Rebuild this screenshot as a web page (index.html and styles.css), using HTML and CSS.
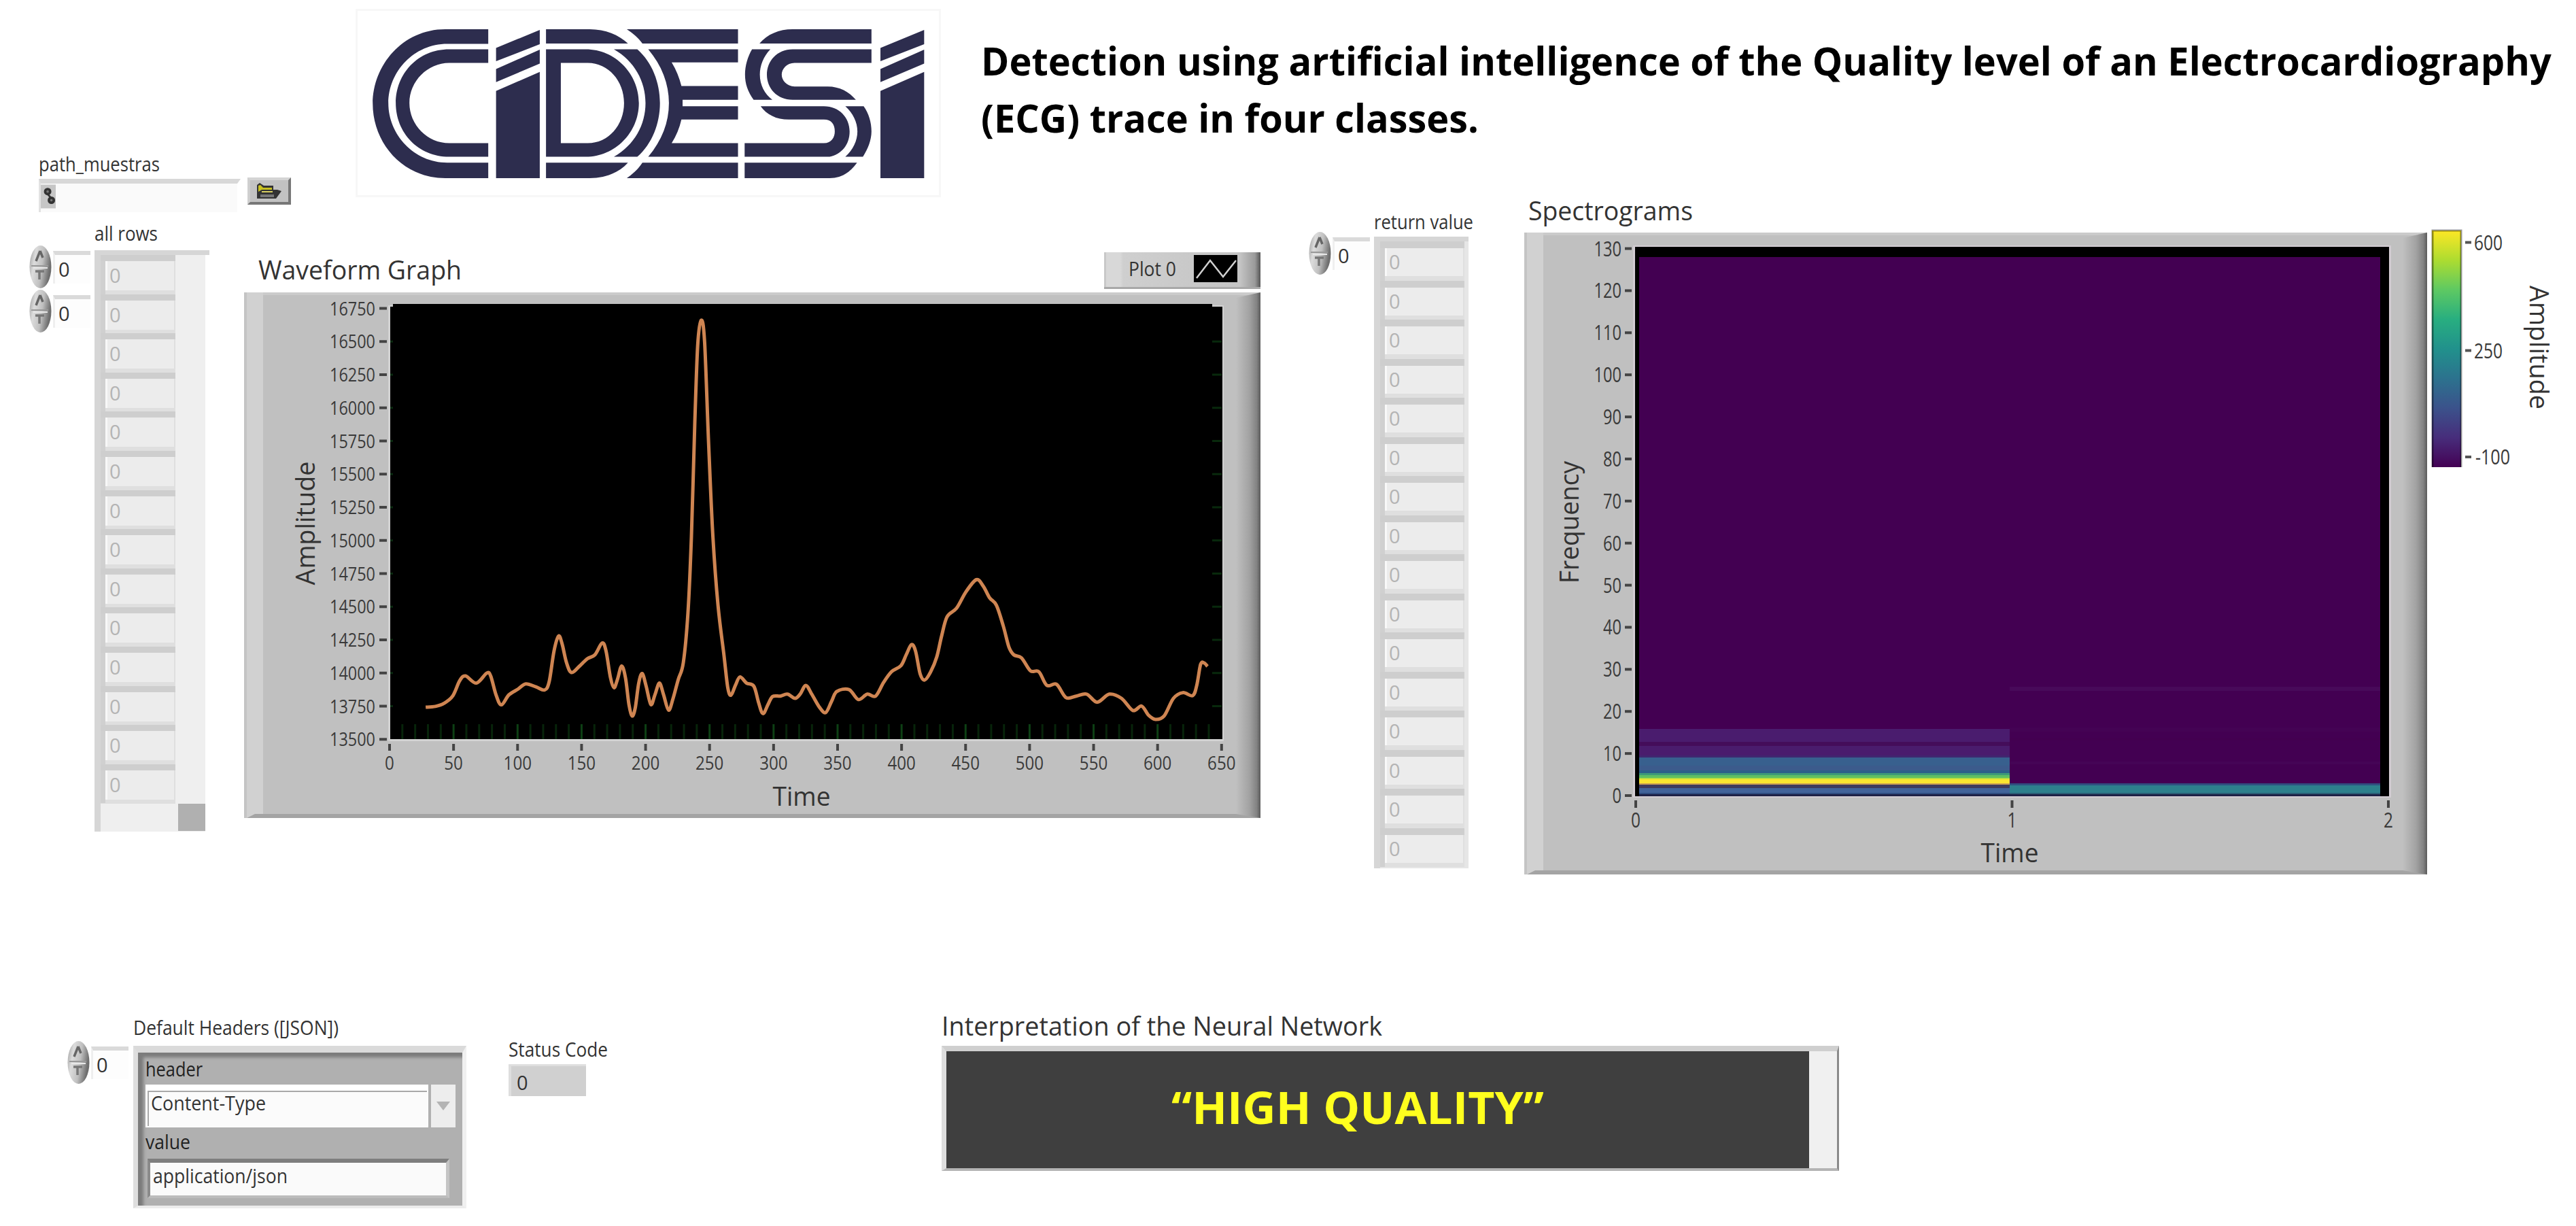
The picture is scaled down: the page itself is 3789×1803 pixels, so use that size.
FILE: index.html
```html
<!DOCTYPE html>
<html lang="en">
<head>
    <meta charset="UTF-8">
    <meta name="viewport" content="width=device-width, initial-scale=1.0">
    <title>ECG Quality Level</title>
    <link rel="stylesheet" href="styles.css">
</head>
<body>
    <svg width="0" height="0" class="defs">
        <defs>
            <linearGradient id="knobFill" x1="0" x2="1" y1="0" y2="0.3">
                <stop offset="0" stop-color="#9a9a9a"/>
                <stop offset="0.3" stop-color="#dcdcdc"/>
                <stop offset="0.65" stop-color="#c0c0c0"/>
                <stop offset="1" stop-color="#6e6e6e"/>
            </linearGradient>
            <symbol id="knob" viewBox="0 0 33 65" preserveAspectRatio="none">
                <ellipse cx="16.5" cy="32.5" rx="16" ry="31.5" fill="url(#knobFill)"/>
                <path d="M16 9 L10 24 M16 9 L20 19" stroke="#666" stroke-width="3.5" fill="none"/>
                <path d="M3 31 H28" stroke="#999" stroke-width="2"/>
                <path d="M6 34 H27" stroke="#e8e8e8" stroke-width="2"/>
                <path d="M9 39 H22 M15 39 V51" stroke="#777" stroke-width="3.5" fill="none"/>
            </symbol>
        </defs>
    </svg>

    <header class="header">
        <div class="path-control">
            <span class="label" data-width="178">path_muestras</span>
            <div class="path-row">
                <div class="path-field">
                    <svg class="path-icon" viewBox="0 0 24 38">
                        <rect width="24" height="38" fill="#c6c6c6"/>
                        <circle cx="11" cy="11" r="4" fill="#777" stroke="#333" stroke-width="4"/>
                        <circle cx="17" cy="25" r="4" fill="#777" stroke="#333" stroke-width="4"/>
                        <path d="M11 15 L17 22" stroke="#333" stroke-width="3"/>
                    </svg>
                </div>
                <div class="browse">
                    <svg width="38" height="26" viewBox="0 0 38 26">
                        <path d="M1 24 V4 L5 1 L11 5 H25 V11 H31 L37 13 L29 24 Z" fill="#333"/>
                        <path d="M3 14 V5 L6 4 L10 8 H23 V11 H8 Z" fill="#c8c020"/>
                        <path d="M8 14 H24" stroke="#d8cf60" stroke-width="2"/>
                        <path d="M6 20 H26" stroke="#777" stroke-width="4"/>
                    </svg>
                </div>
            </div>
        </div>
        <svg class="logo" viewBox="40 40 1500 830" preserveAspectRatio="none">
            <g fill="#2d2d4e">
                <path d="M380 130 H270 C160 130 84 290 84 458 C84 630 160 786 270 786 H380 V718 H275 C190 718 124 595 124 456 C124 316 190 194 275 194 H380 Z"/>
                <path d="M380 218 H280 C200 218 143 325 143 455 C143 585 200 692 280 692 H380 V632 H280 C225 632 178 552 178 455 C178 358 225 278 280 278 H380 Z"/>
                <path d="M400 212 L512 133 V196 L400 271 Z M400 305 L512 220 V281 L400 363 Z M400 402 L512 318 V786 H400 Z"/>
                <path d="M528 130 H640 C680 130 715 155 738 193 H528 Z M528 718 H738 C715 762 680 786 640 786 H528 Z"/>
                <path fill-rule="evenodd" d="M528 218 H630 C705 218 766 325 766 455 C766 585 705 692 630 692 H528 Z M566 278 V632 H635 C688 632 728 552 728 455 C728 358 688 278 635 278 Z"/>
                <path d="M702 218 H762 C800 275 820 365 820 455 C820 545 800 635 762 692 H702 C755 640 783 550 783 455 C783 360 755 270 702 218 Z"/>
                <path d="M735 130 H1020 V193 H775 C765 168 750 147 735 130 Z M735 786 H1020 V718 H775 C765 745 750 768 735 786 Z"/>
                <path d="M790 218 H1020 V276 H850 C862 310 870 345 875 380 H1020 V441 H878 V469 H1020 V528 H875 C870 565 862 600 850 632 H1020 V692 H790 C825 620 843 540 843 455 C843 370 825 290 790 218 Z"/>
                <path d="M1075 193 C1095 152 1125 130 1160 130 H1362 V193 Z M1056 218 H1103 C1085 250 1076 290 1076 330 C1076 375 1088 415 1108 441 H1060 C1045 405 1038 370 1038 330 C1038 290 1045 250 1056 218 Z"/>
                <path d="M1362 218 H1160 C1120 218 1094 270 1094 330 C1094 390 1120 441 1160 441 H1322 C1305 405 1280 382 1250 382 H1165 C1145 382 1132 355 1132 330 C1132 305 1145 278 1165 278 H1362 Z"/>
                <path d="M1078 469 H1240 C1280 469 1306 520 1306 580 C1306 640 1285 680 1255 692 H1037 V632 H1240 C1260 632 1268 605 1268 580 C1268 550 1260 528 1240 528 H1150 C1118 528 1093 505 1078 469 Z"/>
                <path d="M1295 469 H1342 C1355 500 1362 540 1362 580 C1362 620 1352 660 1340 692 H1295 C1315 660 1326 620 1326 580 C1326 540 1315 500 1295 469 Z M1037 718 H1325 C1308 760 1285 786 1255 786 H1037 Z"/>
                <path d="M1385 212 L1497 133 V196 L1385 271 Z M1385 305 L1497 220 V281 L1385 363 Z M1385 402 L1497 318 V786 H1385 Z"/>
            </g>
        </svg>
        <h1 class="title">
            <span class="fit" data-width="2310">Detection using artificial intelligence of the Quality level of an Electrocardiography</span><br>
            <span class="fit" data-width="732">(ECG) trace in four classes.</span>
        </h1>
    </header>

    <main class="main">
        <div class="index-col">
            <div class="index"><svg class="knob"><use href="#knob"/></svg><div class="index-value">0</div></div>
            <div class="index"><svg class="knob"><use href="#knob"/></svg><div class="index-value">0</div></div>
        </div>
        <div class="array rows-array">
            <span class="label" data-width="93">all rows</span>
            <div class="array-frame">
                <div class="cells" data-count="14"></div>
                <div class="scroll"></div>
                <div class="scroll-corner"></div>
            </div>
        </div>

        <section class="waveform">
            <div class="graph-head">
                <span class="label large" data-width="299">Waveform Graph</span>
                <div class="legend">
                    <span class="label" data-width="70">Plot 0</span>
                    <svg class="legend-line" viewBox="0 0 64 40">
                        <path d="M4 34 L24 8 L43 32 L62 8" fill="none" stroke="#d0d0d0" stroke-width="2.5"/>
                    </svg>
                </div>
            </div>
            <svg id="waveform" class="graph-panel" width="1495" height="773" viewBox="359 430 1495 773"></svg>
        </section>

        <div class="index-col return-index">
            <div class="index"><svg class="knob"><use href="#knob"/></svg><div class="index-value">0</div></div>
        </div>
        <div class="array return-array">
            <span class="label" data-width="146">return value</span>
            <div class="array-frame">
                <div class="cells" data-count="16"></div>
            </div>
        </div>

        <section class="spectrogram">
            <span class="label large" data-width="242">Spectrograms</span>
            <svg id="spectrogram" class="graph-panel" width="1328" height="944" viewBox="2242 342 1328 944"></svg>
        </section>
        <svg id="ramp" class="ramp" width="213" height="380" viewBox="3576 337 213 380"></svg>
    </main>

    <footer class="footer">
        <div class="index-col headers-index">
            <div class="index"><svg class="knob"><use href="#knob"/></svg><div class="index-value">0</div></div>
        </div>
        <div class="headers">
            <span class="label" data-width="302">Default Headers ([JSON])</span>
            <div class="cluster">
                <span class="label" data-width="84">header</span>
                <div class="combo">
                    <div class="combo-text"><span class="label" data-width="169">Content-Type</span></div>
                    <div class="combo-arrow"></div>
                </div>
                <span class="label" data-width="66">value</span>
                <div class="text-field"><span class="label" data-width="198">application/json</span></div>
            </div>
        </div>
        <div class="status">
            <span class="label" data-width="146">Status Code</span>
            <div class="status-value">0</div>
        </div>
        <div class="result">
            <span class="label large" data-width="648">Interpretation of the Neural Network</span>
            <div class="result-box">
                <div class="result-text"><span class="fit" data-width="548">“HIGH QUALITY”</span></div>
                <div class="result-scroll"></div>
            </div>
        </div>
    </footer>

    <script>
        // array cells
        document.querySelectorAll('.cells').forEach(function(el) {
            for (var i = 0; i < Number(el.dataset.count); i++) {
                var cell = document.createElement('div');
                cell.className = 'cell';
                cell.innerHTML = '<div class="cell-value">0</div>';
                el.appendChild(cell);
            }
        });

        // squeeze captions to their width
        document.querySelectorAll('[data-width]').forEach(function(el) {
            var natural = el.getBoundingClientRect().width;
            el.style.transform = 'scaleX(' + (el.dataset.width / natural).toFixed(4) + ')';
        });

        function rect(x, y, w, h, fill) {
            return '<rect x="' + x + '" y="' + y + '" width="' + w + '" height="' + h + '" fill="' + fill + '"/>';
        }

        function text(str, x, y, len, anchor, cls) {
            return '<text class="' + (cls || 'tick') + '" x="' + x + '" y="' + y + '" text-anchor="' + anchor +
                '" textLength="' + len + '" lengthAdjust="spacingAndGlyphs">' + str + '</text>';
        }

        // raised grey plate behind a graph
        function plate(id, x, y, w, h) {
            return '<defs><linearGradient id="' + id + '"><stop offset="0" stop-color="#c0c0c0"/>' +
                '<stop offset="0.55" stop-color="#a2a2a2"/><stop offset="0.85" stop-color="#828282"/><stop offset="1" stop-color="#5a5a5a"/></linearGradient></defs>' +
                rect(x, y, w, h, '#c0c0c0') +
                rect(x, y, w, 4, '#cbcbcb') +
                rect(x, y, 28, h, '#d1d1d1') +
                rect(x, y, 4, h, '#c4c4c4') +
                '<path fill="#a4a4a4" d="M' + (x + 4) + ' ' + (y + h) + ' l12 -6 H' + (x + w) + ' v6 Z"/>' +
                '<path fill="url(#' + id + ')" d="M' + (x + w - 36) + ' ' + (y + 8) + ' L' + (x + w) + ' ' + y + ' V' + (y + h) + ' L' + (x + w - 36) + ' ' + (y + h - 6) + ' Z"/>';
        }

        var samples = [
            [28.2,13742],[35.8,13748],[42.5,13771],[49.3,13826],[54.7,13941],[59.3,13978],[67.8,13924],[75.9,13999],[79,13978],
            [83.2,13835],[87.3,13760],[93.2,13835],[100.3,13878],[106.5,13918],[114.4,13895],[121.1,13872],[124.7,13935],
            [128.5,14166],[132,14278],[134.7,14223],[138.2,14079],[142,14004],[148.2,14050],[154.5,14108],[160.4,14137],
            [166.1,14226],[169.1,14166],[172.6,13964],[175.3,13889],[178,13950],[181.3,14053],[184.3,13964],[187,13763],
            [189.4,13676],[191.9,13734],[194.6,13921],[197.3,13996],[200.3,13907],[204.1,13763],[207.3,13835],[210.8,13924],
            [214.1,13835],[217.9,13720],[221.4,13806],[225.5,13950],[229.5,14079],[233.1,14453],[235.8,15029],[238.5,15892],
            [240.7,16468],[243.4,16661],[246.1,16497],[249.3,15720],[252.6,15029],[256.6,14511],[261.2,14137],[264.2,13892],
            [266.7,13832],[270.2,13907],[273.7,13970],[278.9,13924],[284.6,13901],[288.3,13777],[291.7,13694],[295.7,13763],
            [299.2,13823],[305.4,13826],[310.8,13841],[316.8,13809],[320.9,13843],[325.2,13907],[329.8,13841],[335.8,13743],
            [340.7,13702],[345.3,13786],[349.4,13861],[358.9,13875],[366.2,13800],[373.2,13841],[379.7,13826],[386,13930],
            [392.2,14010],[399.5,14056],[403.6,14137],[407.7,14214],[410.9,14166],[414.5,13993],[418,13947],[422.6,14007],
            [427.5,14122],[431.3,14281],[435.6,14425],[442.9,14488],[450.3,14612],[458.4,14704],[463.8,14655],[468.7,14568],
            [474.1,14511],[479.5,14353],[483.9,14194],[487.7,14137],[493.7,14114],[500.7,14016],[507.2,14010],[513.5,13907],
            [521.1,13915],[528.4,13815],[536.5,13826],[544.6,13841],[552.8,13780],[562.3,13841],[571.8,13809],[580.7,13717],
            [587.5,13751],[592.9,13682],[598.3,13650],[605.1,13676],[612.4,13809],[619.8,13852],[627.4,13829],[630.6,13907],
            [633.6,14065],[636.3,14076],[639,14050]
        ];

        function curve(pts) {
            var d = 'M' + pts[0];
            for (var i = 0; i < pts.length - 1; i++) {
                var a = pts[i - 1] || pts[i], b = pts[i], c = pts[i + 1], e = pts[i + 2] || c;
                d += 'C' + [b[0] + (c[0] - a[0]) / 6, b[1] + (c[1] - a[1]) / 6, c[0] - (e[0] - b[0]) / 6,
                    c[1] - (e[1] - b[1]) / 6, c[0], c[1]].map(function(n) { return n.toFixed(1); }).join(' ');
            }
            return d;
        }

        function drawWaveform() {
            var x0 = 573, xs = 1.8828, yTop = 453.5, ys = 0.195;
            var s = plate('edgeA', 359, 430, 1495, 773);
            s += rect(571, 449, 1229, 641, '#d2d2d2') + rect(574, 451, 1224, 636, '#000') + rect(578, 447, 1205, 8, '#000');
            for (var t = 10; t < 650; t += 10) {
                s += rect(x0 + t * xs - 1.5, 1065, 3, 22, t % 50 ? '#07240a' : '#0d4014');
            }
            for (var a = 16750; a >= 13500; a -= 250) {
                var y = yTop + (16750 - a) * ys;
                if (a < 16750 && a > 13500) s += rect(1783, y - 1.5, 14, 3, '#08290c') + rect(574, y - 1.5, 4, 3, '#0a2a10');
                s += rect(558, y - 2, 11, 4, '#444') + text(a, 552, y + 10, 67, 'end');
            }
            for (t = 0; t <= 650; t += 50) {
                var x = x0 + t * xs;
                s += rect(x - 2, 1094, 4, 10, '#444') + text(t, x, 1132, 13.8 * String(t).length, 'middle');
            }
            s += text('Time', 1179, 1185, 85, 'middle', 'axis-title');
            s += '<g transform="translate(463 769.5) rotate(-90)">' + text('Amplitude', 0, 0, 182, 'middle', 'axis-title') + '</g>';
            var pts = samples.map(function(p) { return [x0 + p[0] * xs, yTop + (16750 - p[1]) * ys]; });
            s += '<path d="' + curve(pts) + '" fill="none" stroke="#cf8552" stroke-width="5" stroke-linejoin="round"/>';
            document.getElementById('waveform').innerHTML = s;
        }

        function drawSpectrogram() {
            var s = plate('edgeB', 2242, 342, 1328, 944);
            s += rect(2402, 361, 1115, 812, '#d2ccd2') + rect(2405, 363, 1109, 808, '#000') + rect(2411, 378, 1090, 792, '#430052');
            // power bands of each second: [top, height, colour]
            [[1072, 19, '#4a1c6e'], [1091, 6, '#440d5a'], [1097, 14, '#4a1c6d'], [1111, 3, '#40266f'], [1114, 12, '#38608e'],
             [1126, 7, '#3c5b8c'], [1133, 4, '#2b5f89'], [1137, 3, '#3c9a78'], [1140, 4, '#5fbf62'], [1144, 2, '#b8dc40'],
             [1146, 6, '#fbe530'], [1152, 2, '#c89a55'], [1154, 5, '#3e3a5e'], [1159, 7, '#42639a'], [1166, 2, '#2f4c80'],
             [1168, 3, '#1e2145']].forEach(function(b) {
                s += rect(2411, b[0], 545, b[1], b[2]);
            });
            [[1010, 6, '#480a5a'], [1070, 6, '#440354'], [1085, 4, '#430050'], [1120, 4, '#450556'], [1152, 3, '#305080'], [1155, 11, '#2d808c'], [1166, 2, '#2b5d75'],
             [1168, 3, '#1e2145']].forEach(function(b) {
                s += rect(2956, b[0], 545, b[1], b[2]);
            });
            for (var f = 0; f <= 130; f += 10) {
                var y = 1170 - f * 6.188;
                s += rect(2390, y - 2, 10, 4, '#444') + text(f, 2385, y + 11, 13.5 * String(f).length, 'end', 'tick tall');
            }
            [0, 1, 2].forEach(function(t) {
                var x = 2406 + t * 553.5;
                s += rect(x - 2, 1177, 4, 11, '#444') + text(t, x, 1217, 14, 'middle', 'tick tall');
            });
            s += text('Time', 2956, 1268, 85, 'middle', 'axis-title');
            s += '<g transform="translate(2322 768) rotate(-90)">' + text('Frequency', 0, 0, 180, 'middle', 'axis-title') + '</g>';
            document.getElementById('spectrogram').innerHTML = s;
        }

        function drawRamp() {
            var stops = ['#fde725', '#addc30', '#5ec962', '#28ae80', '#21918c', '#2c728e', '#3b528b', '#472d7b', '#440154'];
            var s = '<defs><linearGradient id="viridis" x2="0" y2="1">';
            stops.forEach(function(c, i) {
                s += '<stop offset="' + i / 8 + '" stop-color="' + c + '"/>';
            });
            s += '</linearGradient></defs>' + rect(3577, 339, 43, 348, 'url(#viridis)') +
                '<path d="M3578 687 V339 H3620 V687" fill="none" stroke="#000" stroke-opacity="0.4" stroke-width="3"/>';
            [[600, 356.5, 42], [250, 515.5, 42], [-100, 672, 51]].forEach(function(r) {
                s += rect(3626, r[1] - 2, 9, 4, '#555') + text(r[0], r[0] < 0 ? 3641 : 3639, r[1] + 11, r[2], 'start', 'tick tall');
            });
            s += '<g transform="translate(3721 511) rotate(90)">' + text('Amplitude', 0, 0, 182, 'middle', 'axis-title') + '</g>';
            document.getElementById('ramp').innerHTML = s;
        }

        drawWaveform();
        drawSpectrogram();
        drawRamp();
    </script>
</body>
</html>
```
FILE: styles.css
```css
* {
    box-sizing: border-box;
}
body {
    margin: 0;
    width: 3789px;
    height: 1803px;
    background-color: #fff;
    font-family: "Open Sans", "Noto Sans", sans-serif;
    font-weight: 500;
    color: #333;
    overflow: hidden;
}
.defs {
    position: absolute;
}
.label, .fit {
    display: inline-block;
    white-space: nowrap;
    transform-origin: left center;
}
.label {
    font-size: 28.5px;
    line-height: 36px;
    height: 36px;
    vertical-align: top;
}
.label.large {
    font-size: 38px;
    font-weight: 400;
    line-height: 50px;
    height: 48px;
}
.header {
    display: flex;
    align-items: flex-start;
    height: 310px;
    padding-left: 57px;
}
.path-control {
    flex: none;
    width: 371px;
    margin-top: 223px;
}
.path-row {
    display: flex;
    justify-content: space-between;
    align-items: flex-start;
    margin-top: 2px;
}
.path-field {
    width: 297px;
    height: 49px;
    margin-top: 2px;
    border-top: 7px solid #d8d8d8;
    border-left: 3px solid #e2e2e2;
    border-right: 5px solid #fff;
    background-color: #fafafa;
}
.path-icon {
    display: block;
    width: 22px;
    height: 38px;
}
.browse {
    display: flex;
    align-items: center;
    justify-content: center;
    width: 64px;
    height: 40px;
    background-color: #c2c2c2;
    border: 4px solid;
    border-color: #d4d4d4 #777 #777 #cfcfcf;
}
.logo {
    flex: none;
    width: 861px;
    height: 277px;
    margin: 13px 0 0 95px;
    outline: 3px solid #f7f7f7;
    outline-offset: -3px;
}
.title {
    margin: 47px 0 0 59px;
    font-size: 57px;
    line-height: 84px;
    font-weight: 700;
    color: #000;
    white-space: nowrap;
}
.main {
    display: flex;
    align-items: flex-start;
    height: 1183px;
    padding-left: 43px;
}
.main > *, .footer > * {
    flex: none;
}
.index-col {
    margin-top: 50px;
}
.index {
    display: flex;
    width: 90px;
    height: 65px;
}
.knob {
    width: 33px;
    height: 65px;
}
.index-value {
    width: 55px;
    height: 48px;
    margin: 9px 0 0 2px;
    padding-left: 5px;
    border-top: 6px solid #dadada;
    border-left: 3px solid #efefef;
    background-color: #fdfdfd;
    font-size: 29px;
    line-height: 42px;
}
.array .label {
    display: block;
    width: max-content;
}
.rows-array {
    width: 169px;
    margin: 15px 0 0 6px;
}
.array-frame {
    display: grid;
    grid-template-columns: 114px 40px;
    width: 169px;
    height: 855px;
    margin-top: 7px;
    padding-right: 6px;
    border-top: 7px solid #d6d6d6;
    border-left: 9px solid #d6d6d6;
    background: linear-gradient(#efefef, #efefef) content-box;
}
.cells {
    width: 110px;
    background-color: #dfdfdf;
}
.cell {
    height: 57.6px;
    padding-left: 7px;
    border-top: 9px solid #cecece;
    background: linear-gradient(90deg, #d0d0d0 7px, #dfdfdf 7px);
}
.cell-value {
    width: 101px;
    height: 43px;
    padding-left: 3px;
    background-color: #ececec;
    border-left: 3px solid #f8f8f8;
    color: #b4b4b4;
    font-size: 29px;
    line-height: 41px;
}
.scroll-corner {
    grid-column: 2;
    height: 40px;
    background-color: #b0b0b0;
}
.waveform {
    width: 1495px;
    margin: 61px 0 0 51px;
}
.graph-head {
    display: flex;
    justify-content: space-between;
    align-items: flex-start;
    height: 59px;
    padding-left: 21px;
}
.legend {
    display: flex;
    align-items: center;
    justify-content: space-between;
    width: 230px;
    height: 54px;
    padding: 0 34px 3px 36px;
    background: linear-gradient(90deg, #c8c8c8 3px, #d8d8d8 3px, #d8d8d8 24px, #cfcfcf 28px, #c4c4c4 200px, #9a9a9a 222px, #555 230px);
    border-bottom: 3px solid #a8a8a8;
}
.legend .label {
    width: max-content;
}
.legend-line {
    width: 64px;
    height: 40px;
    background-color: #000;
}
.graph-panel {
    display: block;
}
.tick {
    font-size: 28px;
    fill: #3a3a3a;
}
.tick.tall {
    font-size: 31px;
}
.axis-title {
    font-size: 38px;
    fill: #333;
}
.return-index {
    margin: 30px 0 0 71px;
}
.return-array {
    width: 141px;
    margin: -2px 0 0 6px;
}
.return-array .array-frame {
    display: block;
    width: 139px;
    height: 929px;
    margin-top: 4px;
    padding-right: 0;
    background: #e6e6e6;
}
.return-array .cells {
    width: 124px;
}
.return-array .cell {
    height: 57.5px;
    border-top-width: 10px;
}
.return-array .cell-value {
    width: 115px;
    height: 41px;
    line-height: 39px;
}
.spectrogram {
    width: 1328px;
    margin: -26px 0 0 80px;
}
.spectrogram .label {
    margin: 0 0 10px 6px;
}
.ramp {
    margin: 27px 0 0 6px;
}
.footer {
    display: flex;
    align-items: flex-start;
    height: 310px;
    padding-left: 99px;
}
.headers-index {
    margin-top: 37px;
}
.headers {
    width: 494px;
    margin-left: 7px;
}
.cluster {
    width: 490px;
    height: 239px;
    margin-top: 9px;
    padding: 6px 10px 0 11px;
    border: solid;
    border-width: 10px 6px 4px 7px;
    border-color: #dadada #f0f0f0 #ececec #dedede;
    background-color: #b0b0b0;
    box-shadow: inset 8px 7px 4px #7c7c7c;
}
.cluster > .label {
    display: block;
    width: max-content;
    color: #222;
}
.combo {
    display: flex;
    gap: 4px;
    height: 63px;
    margin-top: 5px;
}
.combo-text {
    width: 420px;
    padding: 7px 0 0 6px;
    background-color: #fbfbfb;
    border: 2px solid #fff;
    box-shadow: inset 2px 8px 0 -1px #fff, inset 4px 10px 0 -1px #a8a8a8;
}
.combo-arrow {
    display: flex;
    align-items: center;
    justify-content: center;
    width: 36px;
    background-color: #ededed;
}
.combo-arrow::before {
    content: "";
    border: solid transparent;
    border-width: 13px 10px 0;
    border-top-color: #b4b4b4;
}
.cluster .combo + .label {
    margin-top: 3px;
}
.text-field {
    width: 444px;
    height: 58px;
    margin: 7px 0 0 3px;
    padding: 1px 0 0 4px;
    border: solid;
    border-width: 6px 5px 4px 4px;
    border-color: #7e7e7e #c4c4c4 #bcbcbc #8a8a8a;
    background-color: #fafafa;
}
.status {
    width: 146px;
    margin: 32px 0 0 58px;
}
.status-value {
    width: 114px;
    height: 47px;
    margin-top: 4px;
    padding-left: 8px;
    border-top: 3px solid #dedede;
    border-left: 4px solid #dedede;
    background-color: #d0d0d0;
    font-size: 29px;
    line-height: 48px;
}
.result {
    width: 1322px;
    margin: -10px 0 0 491px;
}
.result-box {
    display: flex;
    width: 1320px;
    height: 184px;
    margin-top: 7px;
    border: solid;
    border-width: 8px 3px 4px 7px;
    border-color: #cfcfcf #8a8a8a #b4b4b4 #dedede;
    background-color: #3f3f3f;
}
.result-text {
    flex: 1;
    padding-left: 331px;
    color: #ffff1e;
    font-family: "Open Sans", sans-serif;
    font-size: 67px;
    font-weight: 700;
    line-height: 162px;
}
.result-scroll {
    width: 41px;
    background-color: #f0f0f0;
}
```
